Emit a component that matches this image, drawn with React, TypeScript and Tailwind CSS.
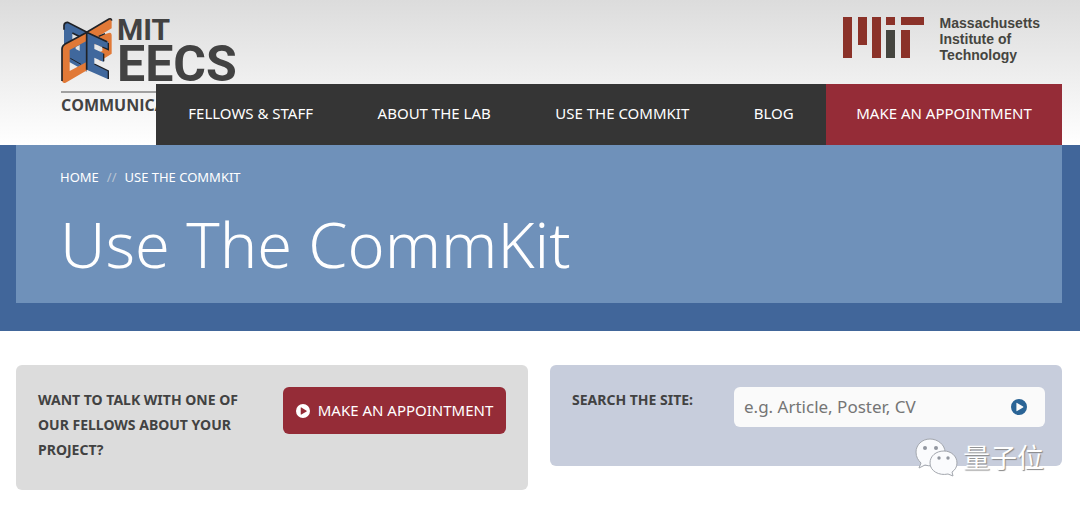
const NAV_ITEMS = ["Fellows & Staff", "About the Lab", "Use the CommKit", "Blog"];

function EecsMark() {
  return (
    <svg viewBox="34 22 156 204" className="h-[68px] w-[52px] shrink-0" aria-hidden>
      {/* back left E */}
      <path d="M43 47 Q44 38 54 38 L111 68 V186 L43 148 Z" fill="#40689d" />
      <path d="M68 70 L88 80 L68 91 Z M78 112 L90 106 V124 L78 118 Z" fill="#e2e2e2" />
      <path d="M43 60 V47 Q44 38 54 38 L112 68 M68 70 L88 80" fill="none" stroke="#1f2227" strokeWidth="5" />
      {/* back right S */}
      <path d="M111 68 L178 28 Q186 25 186 34 V56 L149 78 L180 69 Q187 70 186 80 V132 L150 155 V128 L150 104 L128 104 L111 88 Z" fill="#e17937" />
      <path d="M148 108 L158 113 V124 L148 128 Z" fill="#e2e2e2" />
      <path d="M111 68 L178 28 Q185 25 186 33" fill="none" stroke="#1f2227" strokeWidth="5" />
      <path d="M147 80 L166 72" fill="none" stroke="#1f2227" strokeWidth="4" />
      {/* front left C */}
      <path d="M112 68 V93 L60 121 V184 L112 156 V182 L48 219 Q37 223 37 212 V118 Q37 109 45 104 Z" fill="#e17937" />
      <path d="M112 68 L45 104 Q37 109 37 118 V214" fill="none" stroke="#1f2227" strokeWidth="5" />
      <path d="M62 146 L94 164" fill="none" stroke="#1f2227" strokeWidth="3" />
      {/* front right E */}
      <path d="M111 66 L176 96 V120 L134 102 V118 L162 131 V157 L134 144 V163 L176 184 V209 L111 180 Z" fill="#40689d" />
      <path d="M111 180 V68 L172 96" fill="none" stroke="#1f2227" strokeWidth="5" />
      <path d="M176 100 V120 L158 112 M162 132 V155 M134 163 L176 184 V208" fill="none" stroke="#1f2227" strokeWidth="4" />
    </svg>
  );
}

function EecsLogo() {
  return (
    <a href="#" className="block w-[176px] font-['Roboto'] font-bold text-[#424242]">
      <span className="flex items-start gap-1">
        <EecsMark />
        <span className="block">
          <span className="block text-[30px] leading-[26px]">MIT</span>
          <span className="block text-[50px] leading-[42px]">EECS</span>
        </span>
      </span>
      <span className="mt-1.5 block h-0.5 bg-[#a0a0a0]" />
      <span className="mt-0.5 block font-['Open_Sans'] text-base leading-5">COMMUNICA</span>
    </a>
  );
}

function MitLogo() {
  return (
    <a href="#" className="flex items-start gap-4 text-[#45453f]">
      <svg viewBox="0 0 81 41" className="h-[41px] w-[81px]" aria-hidden>
        <path d="M0 0h9v41H0zM15 0h9v28h-9zM29 0h9v41h-9zM43 0h9v8h-9zM58 0h23v8H58zM58 13h9v28h-9z" fill="#8b3229" />
        <path d="M43 13h9v28h-9z" fill="#45453f" />
      </svg>
      <span className="-mt-0.5 font-['Liberation_Sans'] text-sm leading-4 font-bold">
        Massachusetts
        <br />
        Institute of
        <br />
        Technology
      </span>
    </a>
  );
}

function PlayIcon({ className }: { className: string }) {
  return (
    <svg viewBox="0 0 16 16" className={className} aria-hidden>
      <path
        fillRule="evenodd"
        fill="currentColor"
        d="M8 0a8 8 0 1 1 0 16A8 8 0 0 1 8 0zM5.4 4.3v7.4q0 .7.7.4l6-3.6q.6-.5 0-.9l-6-3.6q-.7-.4-.7.3z"
      />
    </svg>
  );
}

function Watermark() {
  return (
    <div className="absolute top-[73px] right-[18px] flex items-center gap-1.5">
      <svg viewBox="0 0 42 38" className="h-[38px] w-[42px] overflow-visible" aria-hidden>
        <g stroke="#a3a7ae" strokeWidth="1" fill="#fafbfd">
          <path d="M15 1C7 1 1 7 1 14c0 5 2 8 5 11l-2 5 6-3c9 3 20-2 20-13C30 7 23 1 15 1z" />
          <path d="M29 13c-8 0-14 5-14 12 0 8 9 13 18 11l5 2-1-4c3-2 5-5 5-9 0-7-6-12-13-12z" />
        </g>
        <g fill="#9297a0">
          <circle cx="10" cy="10" r="2" />
          <circle cx="21" cy="10" r="2" />
          <circle cx="24" cy="20" r="1.7" />
          <circle cx="33" cy="20" r="1.7" />
        </g>
      </svg>
      <span className="font-['Noto_Sans_CJK_SC',sans-serif] text-[27px] leading-8 text-white [text-shadow:1px_1px_1px_#888]">
        量子位
      </span>
    </div>
  );
}

export default function App() {
  return (
    <div className="bg-white font-['Noto_Sans',sans-serif] text-[#424242]">
      <header className="bg-linear-to-b from-[#dcdcdc] to-white">
        <div className="flex h-[84px] items-start justify-between pt-[17px] pr-10 pl-[61px]">
          <EecsLogo />
          <MitLogo />
        </div>
        <nav className="relative mr-[18px] ml-[156px] flex h-[61px] bg-[#353535] pb-0.5 text-[15px] text-white uppercase">
          {NAV_ITEMS.map((item) => (
            <a key={item} href="#" className="flex flex-auto items-center justify-center whitespace-nowrap">
              {item}
            </a>
          ))}
          <a href="#" className="-mb-0.5 flex w-[236px] items-center justify-center bg-[#952c37] pb-0.5 whitespace-nowrap">
            Make an Appointment
          </a>
        </nav>
      </header>

      <section className="bg-[#41669a] pr-[18px] pb-7 pl-4">
        <div className="bg-[#6f91ba] px-11 pt-5 pb-4 text-white">
          <div className="flex gap-2 text-[13px] leading-6 uppercase">
            <a href="#">Home</a>
            <span className="text-[#b9c4d2]">//</span>
            <a href="#">Use the CommKit</a>
          </div>
          <h1 className="mt-3 text-[63px] leading-[86px] font-light whitespace-nowrap">Use The CommKit</h1>
        </div>
      </section>

      <main className="grid grid-cols-2 items-start gap-[22px] pt-[34px] pr-[18px] pl-4">
        <section className="flex items-start justify-between rounded-md bg-[#dcdcdc] px-[22px] pt-[22px] pb-7">
          <h2 className="w-[220px] text-sm leading-[25px] font-bold uppercase">
            Want to talk with one of our fellows about your project?
          </h2>
          <button className="flex h-[47px] w-[223px] items-center justify-center gap-2 rounded-md bg-[#952c37] text-[15px] whitespace-nowrap text-white uppercase">
            <PlayIcon className="size-3.5 shrink-0" />
            Make an Appointment
          </button>
        </section>

        <section className="relative rounded-md bg-[#c7cddc] pt-[22px] pr-[17px] pb-[39px] pl-[22px]">
          <form className="flex items-start justify-between" onSubmit={(e) => e.preventDefault()}>
            <label htmlFor="search" className="text-sm leading-[25px] font-bold uppercase">
              Search the site:
            </label>
            <div className="flex h-10 w-[311px] items-center rounded-md bg-[#fafafa] pr-[18px] pl-2.5">
              <input
                id="search"
                type="text"
                placeholder="e.g. Article, Poster, CV"
                className="min-w-0 flex-1 bg-transparent text-[17px] outline-none placeholder:text-[#757575]"
              />
              <button aria-label="Search" className="text-[#2a6496]">
                <PlayIcon className="size-4" />
              </button>
            </div>
          </form>
          <Watermark />
        </section>
      </main>
    </div>
  );
}
